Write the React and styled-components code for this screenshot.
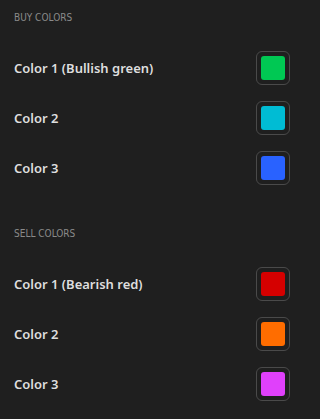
import styled, { createGlobalStyle } from "styled-components";

const GlobalStyle = createGlobalStyle`
  body {
    margin: 0;
    background: #1f1f1f;
  }
`;

const sections = [
  {
    title: "BUY COLORS",
    colors: [
      { label: "Color 1 (Bullish green)", value: "#00c853" },
      { label: "Color 2", value: "#00bcd4" },
      { label: "Color 3", value: "#2962ff" },
    ],
  },
  {
    title: "SELL COLORS",
    colors: [
      { label: "Color 1 (Bearish red)", value: "#d50000" },
      { label: "Color 2", value: "#ff6d00" },
      { label: "Color 3", value: "#e040fb" },
    ],
  },
];

const App = () => {
  return (
    <>
      <GlobalStyle />
      <Panel>
        {sections.map((section) => (
          <Section key={section.title}>
            <SectionTitle>{section.title}</SectionTitle>
            {section.colors.map((c, i) => (
              <Row key={i}>
                <Label>{c.label}</Label>
                <SwatchButton type="button">
                  <Swatch color={c.value} />
                </SwatchButton>
              </Row>
            ))}
          </Section>
        ))}
      </Panel>
    </>
  );
};

export default App;

const Panel = styled.div`
  width: 320px;
  height: 419px;
  background: #1f1f1f;
  font-family: "DejaVu Sans Condensed", "DejaVu Sans", sans-serif;
  display: flex;
  flex-direction: column;
  gap: 31px;
  padding: 8px 30px 0 14px;
  box-sizing: border-box;
`;

const Section = styled.div`
  display: flex;
  flex-direction: column;
`;

const SectionTitle = styled.div`
  height: 20px;
  line-height: 20px;
  font-size: 10px;
  color: #8a8a8a;
  margin-bottom: 15px;
`;

const Row = styled.div`
  height: 50px;
  display: flex;
  align-items: center;
  justify-content: space-between;
`;

const Label = styled.div`
  font-family: "Noto Sans", sans-serif;
  font-size: 13px;
  font-weight: 600;
  color: #dedede;
`;

const SwatchButton = styled.button`
  width: 34px;
  height: 34px;
  padding: 4px;
  box-sizing: border-box;
  background: transparent;
  border: 1px solid #4a4a4a;
  border-radius: 6px;
  display: flex;
  cursor: pointer;
`;

const Swatch = styled.div`
  flex: 1;
  border-radius: 3px;
  background: ${(props) => props.color};
`;
